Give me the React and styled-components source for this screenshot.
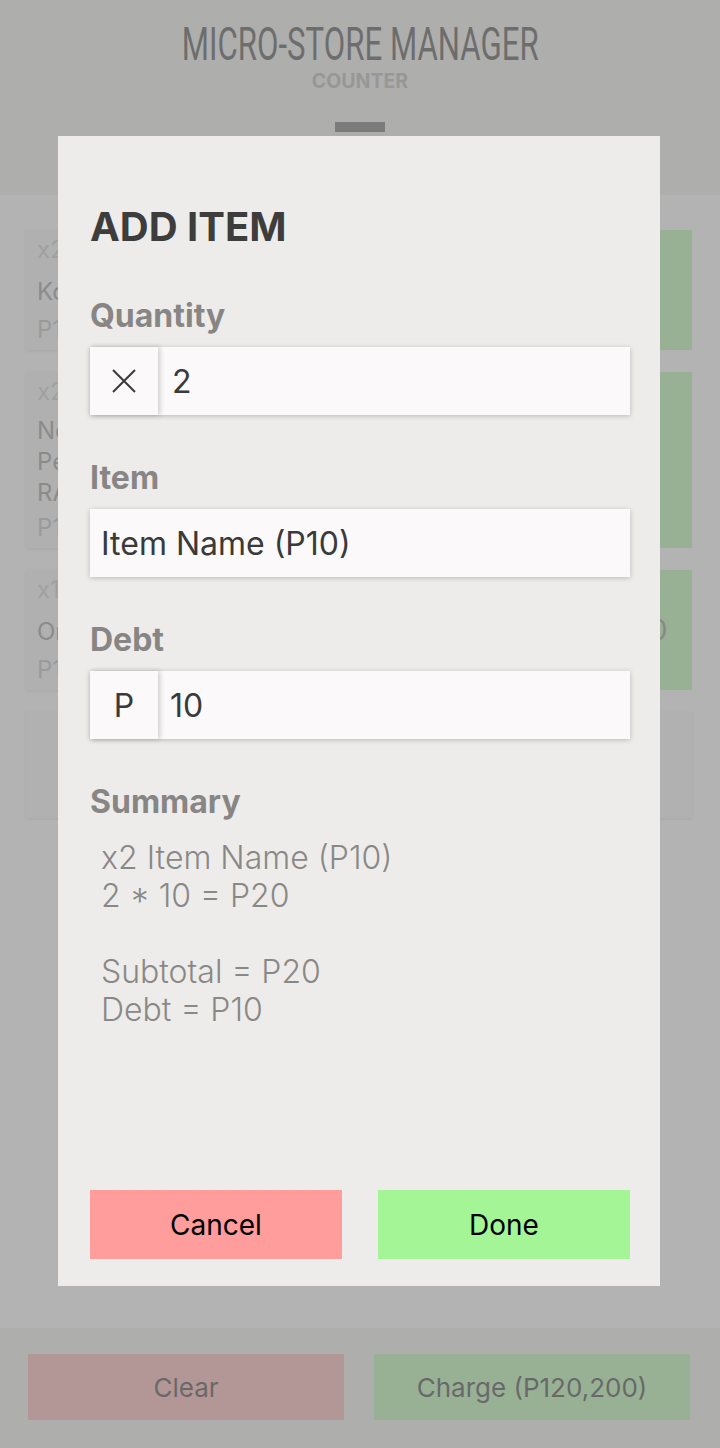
import React from "react";
import styled, { createGlobalStyle } from "styled-components";

const GlobalStyle = createGlobalStyle`
  html, body { margin: 0; padding: 0; }
  body { font-family: Inter, "Noto Sans", sans-serif; background: #ffffff; }
  * { box-sizing: border-box; }
`;

const Page = styled.div`
  position: relative;
  width: 720px;
  height: 1448px;
  display: flex;
  flex-direction: column;
  overflow: hidden;
`;

const Header = styled.header`
  height: 195px;
  flex: none;
  background: #edecea;
  display: flex;
  flex-direction: column;
  align-items: center;
  padding-top: 21px;
`;

const AppTitle = styled.h1`
  margin: 0;
  font-family: Roboto, "Liberation Sans", sans-serif;
  font-weight: 400;
  font-size: 46px;
  line-height: 46px;
  color: #111111;
  white-space: nowrap;
  transform: scaleX(0.678);
`;

const SubTitle = styled.div`
  margin-top: 2px;
  font-weight: 700;
  font-size: 19.5px;
  line-height: 24px;
  color: #9f9f9f;
`;

const TabHandle = styled.div`
  margin-top: 29px;
  width: 50px;
  height: 10px;
  background: #404040;
`;

const Main = styled.main`
  flex: 1;
  background: #ffffff;
  padding: 35px 28px 0 26px;
  display: flex;
  flex-direction: column;
  gap: 22px;
`;

const Row = styled.div`
  display: grid;
  grid-template-columns: 1fr 164px;
  gap: 22px;
  min-height: 120px;
`;

const ItemCard = styled.div`
  background: #f5f5f5;
  box-shadow: 0 1px 4px rgba(0, 0, 0, 0.16);
  padding: 5px 11px;
  display: flex;
  flex-direction: column;
  justify-content: space-between;
  font-size: 24px;
`;

const Qty = styled.div`
  line-height: 30px;
  color: #bdbdbd;
`;

const NameBlock = styled.div`
  margin: 7.5px 0 5.5px;
`;

const NameLine = styled.div`
  line-height: 31px;
  color: #777777;
`;

const Price = styled.div`
  line-height: 30px;
  color: #aaaaaa;
`;

const TotalBox = styled.div`
  background: #a3f596;
  display: flex;
  align-items: center;
  justify-content: center;
  font-size: 28px;
  color: #707070;
`;

const AddCard = styled.div`
  height: 106px;
  background: #f6f6f6;
  box-shadow: 0 1px 4px rgba(0, 0, 0, 0.16);
  display: flex;
  align-items: center;
  justify-content: center;
  font-size: 26px;
  color: #999999;
`;

const Footer = styled.footer`
  height: 120px;
  flex: none;
  background: #edecea;
  display: grid;
  grid-template-columns: 1fr 1fr;
  gap: 30px;
  padding: 26px 30px 28px 28px;
`;

const FooterButton = styled.button`
  border: none;
  margin: 0;
  font-family: inherit;
  font-size: 26px;
  color: #000000;
  background: ${(p) => p.$bg};
`;

const Overlay = styled.div`
  position: absolute;
  inset: 0;
  background: rgba(147, 147, 147, 0.707);
`;

const Modal = styled.section`
  position: absolute;
  top: 136px;
  left: 58px;
  width: 602px;
  height: 1150px;
  background: #edecea;
  display: flex;
  flex-direction: column;
  padding: 67px 30px 27px 32px;
`;

const ModalTitle = styled.h2`
  margin: 0;
  font-weight: 700;
  font-size: 40px;
  line-height: 48px;
  color: #3d3d3d;
`;

const Fields = styled.div`
  margin-top: 46px;
  display: flex;
  flex-direction: column;
  gap: 44px;
`;

const Field = styled.div`
  display: flex;
  flex-direction: column;
`;

const Label = styled.div`
  font-weight: 700;
  font-size: 32px;
  line-height: 38px;
  color: #878685;
`;

const InputBox = styled.div`
  margin-top: 12px;
  height: 68px;
  display: flex;
  background: #fbf9f9;
  box-shadow: 0 1px 5px rgba(0, 0, 0, 0.22);
`;

const Prefix = styled.div`
  position: relative;
  width: 68px;
  flex: none;
  display: flex;
  align-items: center;
  justify-content: center;
  background: #fbf9f9;
  box-shadow: 2px 0 5px rgba(0, 0, 0, 0.18);
  font-size: 32px;
  color: #3a3a3a;
`;

const Value = styled.div`
  flex: 1;
  display: flex;
  align-items: center;
  padding-left: ${(p) => p.$pad || 11}px;
  font-size: 32px;
  color: #3a3a3a;
`;

const Summary = styled.div`
  margin-top: 18px;
  padding-left: 11px;
  font-size: 32px;
  font-weight: 300;
  line-height: 38px;
  color: #8a8886;
  white-space: pre-line;
`;

const Actions = styled.div`
  margin-top: auto;
  display: grid;
  grid-template-columns: 1fr 1fr;
  gap: 36px;
`;

const ActionButton = styled.button`
  height: 69px;
  border: none;
  margin: 0;
  font-family: inherit;
  font-size: 28px;
  color: #000000;
  background: ${(p) => p.$bg};
`;

const TimesIcon = () => (
  <svg width="26" height="26" viewBox="0 0 26 26" aria-hidden="true">
    <path d="M2 2 L24 24 M24 2 L2 24" stroke="#3a3a3a" strokeWidth="2" fill="none" />
  </svg>
);

const rows = [
  { qty: "x2", name: ["Kopiko Brown Coffee"], price: "P10", total: "P20" },
  { qty: "x2", name: ["Nescafe Classic", "Pepsi Blue", "RAMEN Cup"], price: "P15", total: "P30" },
  { qty: "x1", name: ["Oreo Cookies"], price: "P120,150", total: "P120,150" },
];

export default function App() {
  return (
    <>
      <GlobalStyle />
      <Page>
        <Header>
          <AppTitle>MICRO-STORE MANAGER</AppTitle>
          <SubTitle>COUNTER</SubTitle>
          <TabHandle />
        </Header>
        <Main>
          {rows.map((r, i) => (
            <Row key={i}>
              <ItemCard>
                <Qty>{r.qty}</Qty>
                <NameBlock>
                  {r.name.map((n) => (
                    <NameLine key={n}>{n}</NameLine>
                  ))}
                </NameBlock>
                <Price>{r.price}</Price>
              </ItemCard>
              <TotalBox>{r.total}</TotalBox>
            </Row>
          ))}
          <AddCard>+ Add Item</AddCard>
        </Main>
        <Footer>
          <FooterButton $bg="#ff9b9b">Clear</FooterButton>
          <FooterButton $bg="#a3f596">Charge (P120,200)</FooterButton>
        </Footer>
        <Overlay />
        <Modal>
          <ModalTitle>ADD ITEM</ModalTitle>
          <Fields>
            <Field>
              <Label>Quantity</Label>
              <InputBox>
                <Prefix>
                  <TimesIcon />
                </Prefix>
                <Value $pad={14}>2</Value>
              </InputBox>
            </Field>
            <Field>
              <Label>Item</Label>
              <InputBox>
                <Value>Item Name (P10)</Value>
              </InputBox>
            </Field>
            <Field>
              <Label>Debt</Label>
              <InputBox>
                <Prefix>P</Prefix>
                <Value $pad={12}>10</Value>
              </InputBox>
            </Field>
            <Field>
              <Label>Summary</Label>
              <Summary>{"x2 Item Name (P10)\n2 * 10 = P20\n\nSubtotal = P20\nDebt = P10"}</Summary>
            </Field>
          </Fields>
          <Actions>
            <ActionButton $bg="#ff9c9c">Cancel</ActionButton>
            <ActionButton $bg="#a3f596">Done</ActionButton>
          </Actions>
        </Modal>
      </Page>
    </>
  );
}
